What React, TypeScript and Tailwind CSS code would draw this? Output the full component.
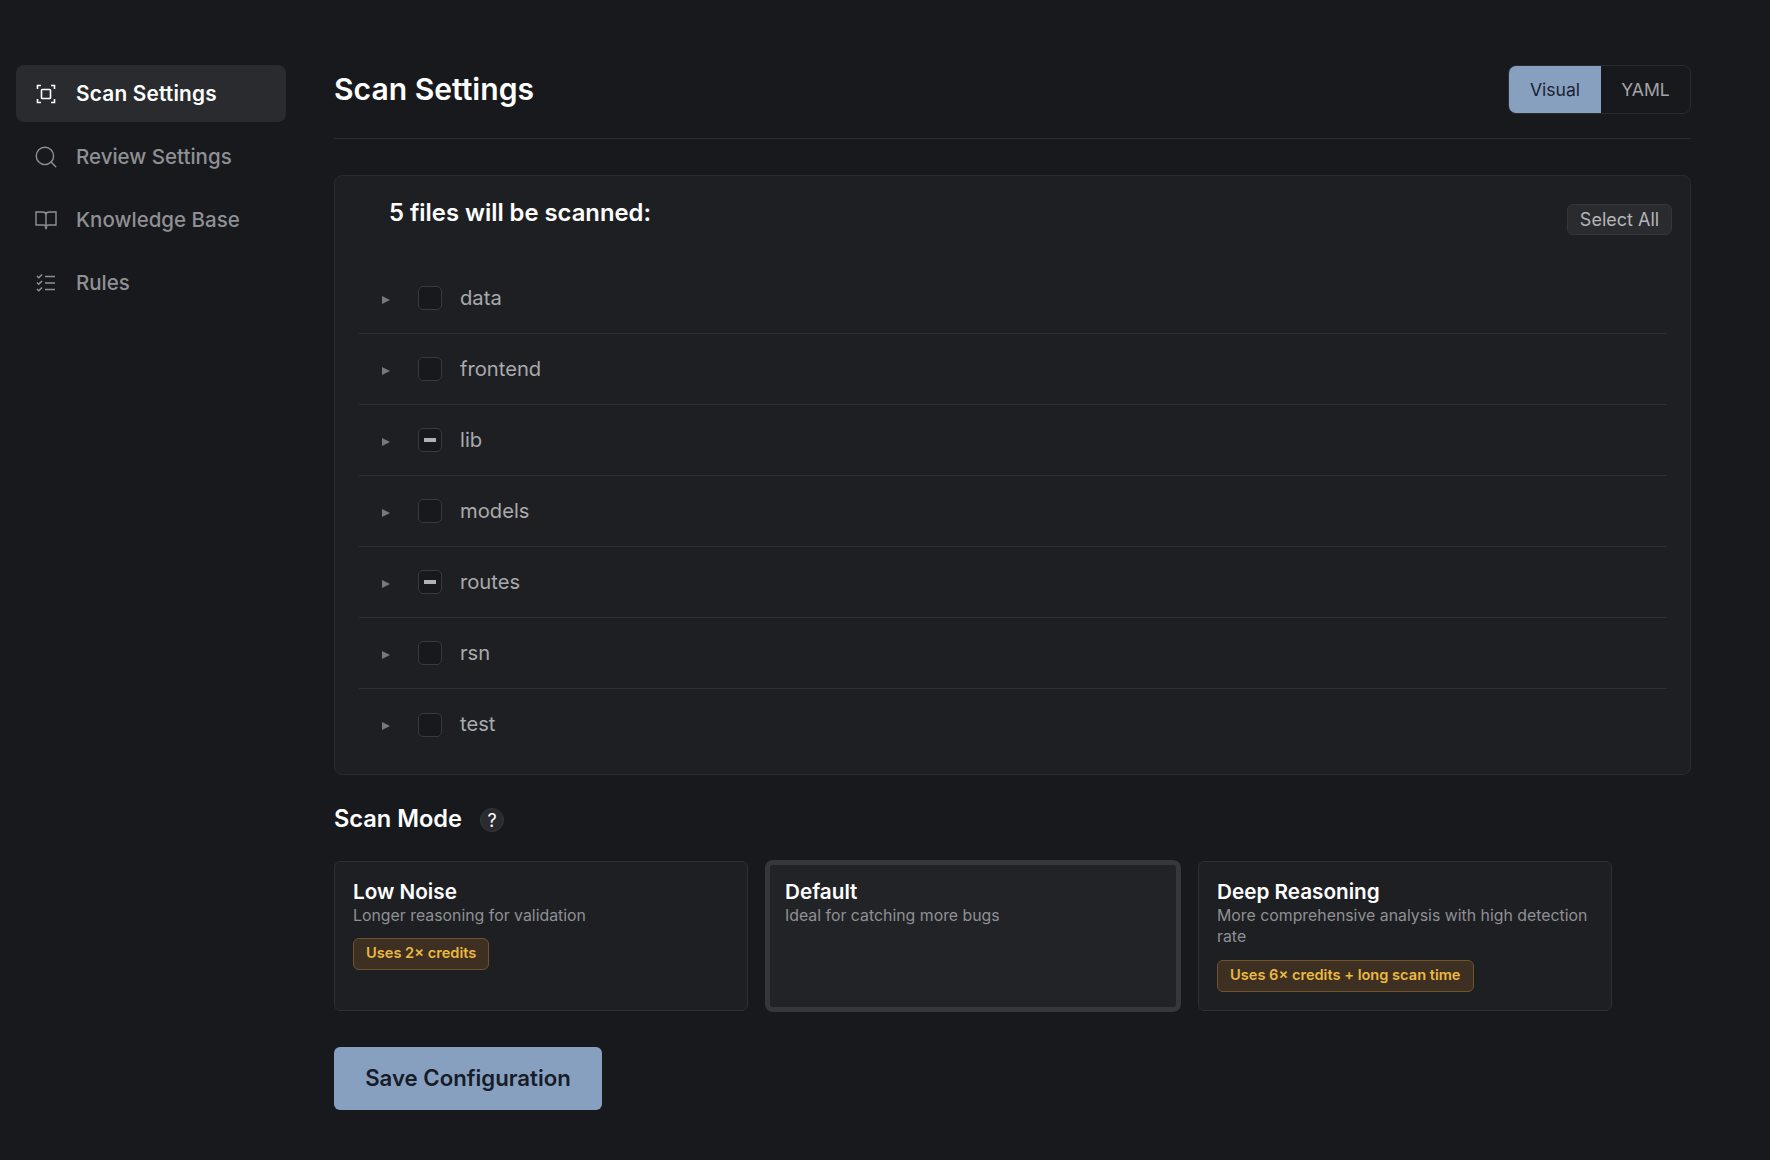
import { Search } from "lucide-react";

function ScanIcon() {
  return (
    <svg width="22" height="22" viewBox="0 0 22 22" fill="none" stroke="currentColor" strokeWidth="1.6">
      <path d="M6 2.5H2.5V6M16 2.5h3.5V6M6 19.5H2.5V16M16 19.5h3.5V16" />
      <rect x="6.5" y="6.5" width="9" height="9" rx="0.8" />
    </svg>
  );
}

function BookIcon() {
  return (
    <svg width="22" height="22" viewBox="0 0 22 22" fill="none" stroke="currentColor" strokeWidth="1.4">
      <path d="M1 3h6.5c2 0 3.5 1 3.5 2.5v12c0-1-1.5-1.5-3-1.5H1zM21 3h-6.5c-2 0-3.5 1-3.5 2.5v12c0-1 1.5-1.5 3-1.5h7z" />
      <path d="M10 17.5l1 2 1-2" />
    </svg>
  );
}

function RulesIcon() {
  return (
    <svg width="22" height="22" viewBox="0 0 22 22" fill="none" stroke="currentColor" strokeWidth="1.5">
      <path d="M2 4l1.8 1.8L7 2.5M2 10.5l1.8 1.8L7 9M2 17l1.8 1.8L7 15.5" />
      <path d="M10 4.5h10M10 11h10M10 17.5h10" />
    </svg>
  );
}

const navItems = [
  { label: "Scan Settings", icon: <ScanIcon />, active: true },
  { label: "Review Settings", icon: <Search size={26} strokeWidth={1.3} className="shrink-0" />, active: false },
  { label: "Knowledge Base", icon: <BookIcon />, active: false },
  { label: "Rules", icon: <RulesIcon />, active: false },
];

const folders = [
  { name: "data", partial: false },
  { name: "frontend", partial: false },
  { name: "lib", partial: true },
  { name: "models", partial: false },
  { name: "routes", partial: true },
  { name: "rsn", partial: false },
  { name: "test", partial: false },
];

const modes = [
  { title: "Low Noise", desc: "Longer reasoning for validation", badge: "Uses 2× credits", badgeTop: "mt-[12px]", selected: false },
  { title: "Default", desc: "Ideal for catching more bugs", badge: "", badgeTop: "", selected: true },
  {
    title: "Deep Reasoning",
    desc: "More comprehensive analysis with high detection rate",
    badge: "Uses 6× credits + long scan time",
    badgeTop: "mt-[13px]",
    selected: false,
  },
];

export default function App() {
  return (
    <div className="flex min-h-screen bg-[#18191d] font-['Inter',sans-serif] pt-[65px] h-[1160px] overflow-hidden">
      <aside className="w-[334px] shrink-0 pl-4 pr-12 flex flex-col gap-[6px]">
        {navItems.map((item) => (
          <div
            key={item.label}
            className={`h-[57px] flex items-center rounded-lg pl-[19px] gap-[19px] leading-[28px] ${
              item.active
                ? "bg-[#2a2b2f] text-white font-semibold text-[20.8px] tracking-[0.2px]"
                : "text-[#8f9094] font-medium text-[20.5px]"
            }`}
          >
            <span className="w-[22px] flex justify-center shrink-0">{item.icon}</span>
            {item.label}
          </div>
        ))}
      </aside>

      <main className="w-[1357px]">
        <div className="flex items-start justify-between h-[74px] border-b border-[#2a2b2f]">
          <h1 className="text-[30.1px] font-semibold text-white leading-[48px]">Scan Settings</h1>
          <div className="flex h-[49px] w-[183px] rounded-lg border border-[#2a2b2f] overflow-hidden text-[17.6px]">
            <div className="w-[92px] bg-[#87a0c0] text-[#1a2233] flex items-center justify-center pt-px">Visual</div>
            <div className="flex-1 text-[#a3a4a8] flex items-center justify-center pt-px">YAML</div>
          </div>
        </div>

        <section className="mt-[36px] h-[600px] rounded-lg border border-[#2a2b2f] bg-[#1e1f23] relative pl-6 pr-[23px]">
          <div className="flex justify-between">
            <h2 className="ml-[30px] mt-[21px] text-[23.8px] font-semibold text-white leading-[32px]">5 files will be scanned:</h2>
            <button className="mt-[28px] mr-[-5px] w-[105px] h-[31px] rounded-md border border-[#35363a] bg-[#2a2b2f] text-[#b4b5b8] text-[18px]">
              Select All
            </button>
          </div>
          <div className="mt-[28px]">
            {folders.map((f, i) => (
              <div
                key={f.name}
                className={`h-[71px] flex items-center ${i < folders.length - 1 ? "border-b border-[#2e2f33]" : ""}`}
              >
                <span className="ml-[23px] mt-[3px] w-0 h-0 border-y-[4.5px] border-y-transparent border-l-[8px] border-l-[#77787c]" />
                <span className="ml-[28px] w-6 h-6 rounded-[5px] border border-[#38393d] bg-[#18191d] flex items-center justify-center">
                  {f.partial && <span className="w-3 h-[4px] bg-[#b0b1b4]" />}
                </span>
                <span className="ml-[18px] text-[20.2px] text-[#a9aaad]">{f.name}</span>
              </div>
            ))}
          </div>
        </section>

        <div className="mt-[27px] flex items-center gap-[18px] h-[34px]">
          <h2 className="text-[23.6px] font-semibold text-white">Scan Mode</h2>
          <span className="w-6 h-6 mt-[2px] rounded-full bg-[#2a2b2f] border border-[#35363a] text-white text-[18px] flex items-center justify-center">?</span>
        </div>

        <div className="mt-[25px] w-[1278px] grid grid-cols-3 gap-[18px]">
          {modes.map((m) => (
            <div
              key={m.title}
              className={
                m.selected
                  ? "h-[152px] -m-px rounded-lg border-[5px] border-[#36373b] bg-[#222327] pl-[15px] pt-[13px]"
                  : "h-[150px] rounded-md px-[18px] pt-[16px] border border-[#2e2f33] bg-[#1e1f23]"
              }
            >
              <div className="text-[20.7px] font-semibold text-white leading-[27px]">{m.title}</div>
              <div className="text-[15.85px] text-[#8f9094] leading-[21px]">{m.desc}</div>
              {m.badge && (
                <div className={`${m.badgeTop} flex w-fit h-[32px] items-center px-3 rounded-md border border-[#70542b] bg-[#3d3022] text-[#ecb93f] text-[14.6px] font-semibold`}>
                  {m.badge}
                </div>
              )}
            </div>
          ))}
        </div>

        <button className="mt-[36px] w-[268px] h-[63px] rounded-md bg-[#87a0c0] text-[#171c28] text-[22.2px] font-semibold pb-px">
          Save Configuration
        </button>
      </main>
    </div>
  );
}
